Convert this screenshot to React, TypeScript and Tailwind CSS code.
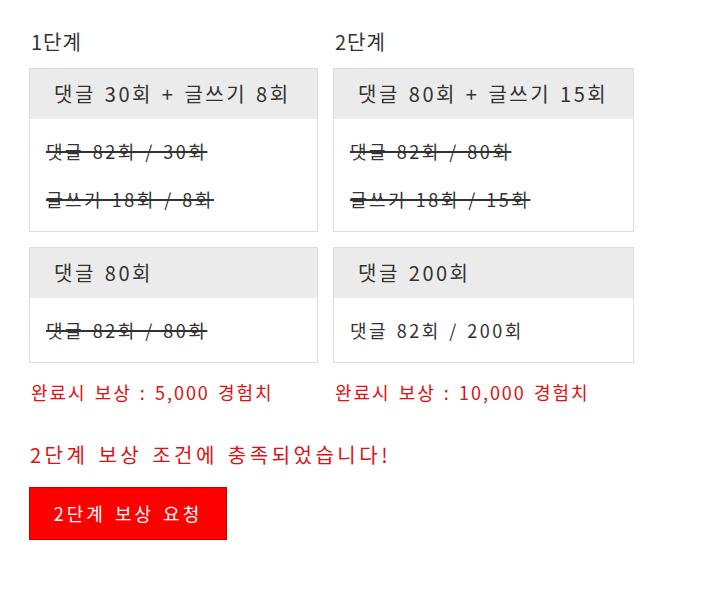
const font = { fontFamily: '"Noto Sans CJK KR", "Noto Sans", sans-serif' }

type Mission = {
    title: string
    lines: { text: string; done: boolean }[]
}

const stages: { label: string; width: string; missions: Mission[]; reward: string }[] = [
    {
        label: "1단계",
        width: "w-[289px]",
        missions: [
            {
                title: "댓글 30회 + 글쓰기 8회",
                lines: [
                    { text: "댓글 82회 / 30회", done: true },
                    { text: "글쓰기 18회 / 8회", done: true },
                ],
            },
            {
                title: "댓글 80회",
                lines: [{ text: "댓글 82회 / 80회", done: true }],
            },
        ],
        reward: "완료시 보상 : 5,000 경험치",
    },
    {
        label: "2단계",
        width: "w-[301px]",
        missions: [
            {
                title: "댓글 80회 + 글쓰기 15회",
                lines: [
                    { text: "댓글 82회 / 80회", done: true },
                    { text: "글쓰기 18회 / 15회", done: true },
                ],
            },
            {
                title: "댓글 200회",
                lines: [{ text: "댓글 82회 / 200회", done: false }],
            },
        ],
        reward: "완료시 보상 : 10,000 경험치",
    },
]

function MissionBox({ mission }: { mission: Mission }) {
    return (
        <div className="border border-[#dddddd] bg-white">
            <div className="h-[50px] bg-[#ebebeb] pl-[24px] text-[20px] leading-[50px] tracking-[2.5px] [word-spacing:2px] text-[#333333] whitespace-nowrap">
                {mission.title}
            </div>
            <div className="py-2 pl-[16px]">
                {mission.lines.map((line) => (
                    <div
                        key={line.text}
                        className={
                            line.done
                                ? "text-[18px] leading-[48px] tracking-[2.5px] [word-spacing:2px] text-[#333333] line-through decoration-2 decoration-[#333333] whitespace-nowrap"
                                : "text-[18px] leading-[48px] tracking-[2.5px] [word-spacing:2px] text-[#333333] whitespace-nowrap"
                        }
                    >
                        {line.text}
                    </div>
                ))}
            </div>
        </div>
    )
}

export default function App() {
    return (
        <div className="min-h-[614px] bg-white pl-[29px] pt-[28px]" style={font}>
            <div className="flex gap-[15px]">
                {stages.map((stage) => (
                    <div key={stage.label} className={stage.width}>
                        <div className="pl-[2px] text-[20px] leading-[28px] tracking-[1px] text-[#333333]">{stage.label}</div>
                        <div className="mt-[12px] flex flex-col gap-[15px]">
                            {stage.missions.map((m) => (
                                <MissionBox key={m.title} mission={m} />
                            ))}
                        </div>
                        <div className="mt-[16px] pl-[2px] text-[18px] leading-[26px] tracking-[2px] [word-spacing:2px] text-[#dd1111] whitespace-nowrap">
                            {stage.reward}
                        </div>
                    </div>
                ))}
            </div>
            <div className="mt-[36px] pl-[1px] text-[20px] leading-[28px] tracking-[3.5px] [word-spacing:2px] text-[#dd1111]">
                2단계 보상 조건에 충족되었습니다!
            </div>
            <button className="mt-[18px] h-[53px] w-[198px] border border-[#cc0000] bg-[#ff0000] text-[18px] tracking-[3px] [word-spacing:2px] text-white">
                2단계 보상 요청
            </button>
        </div>
    )
}
